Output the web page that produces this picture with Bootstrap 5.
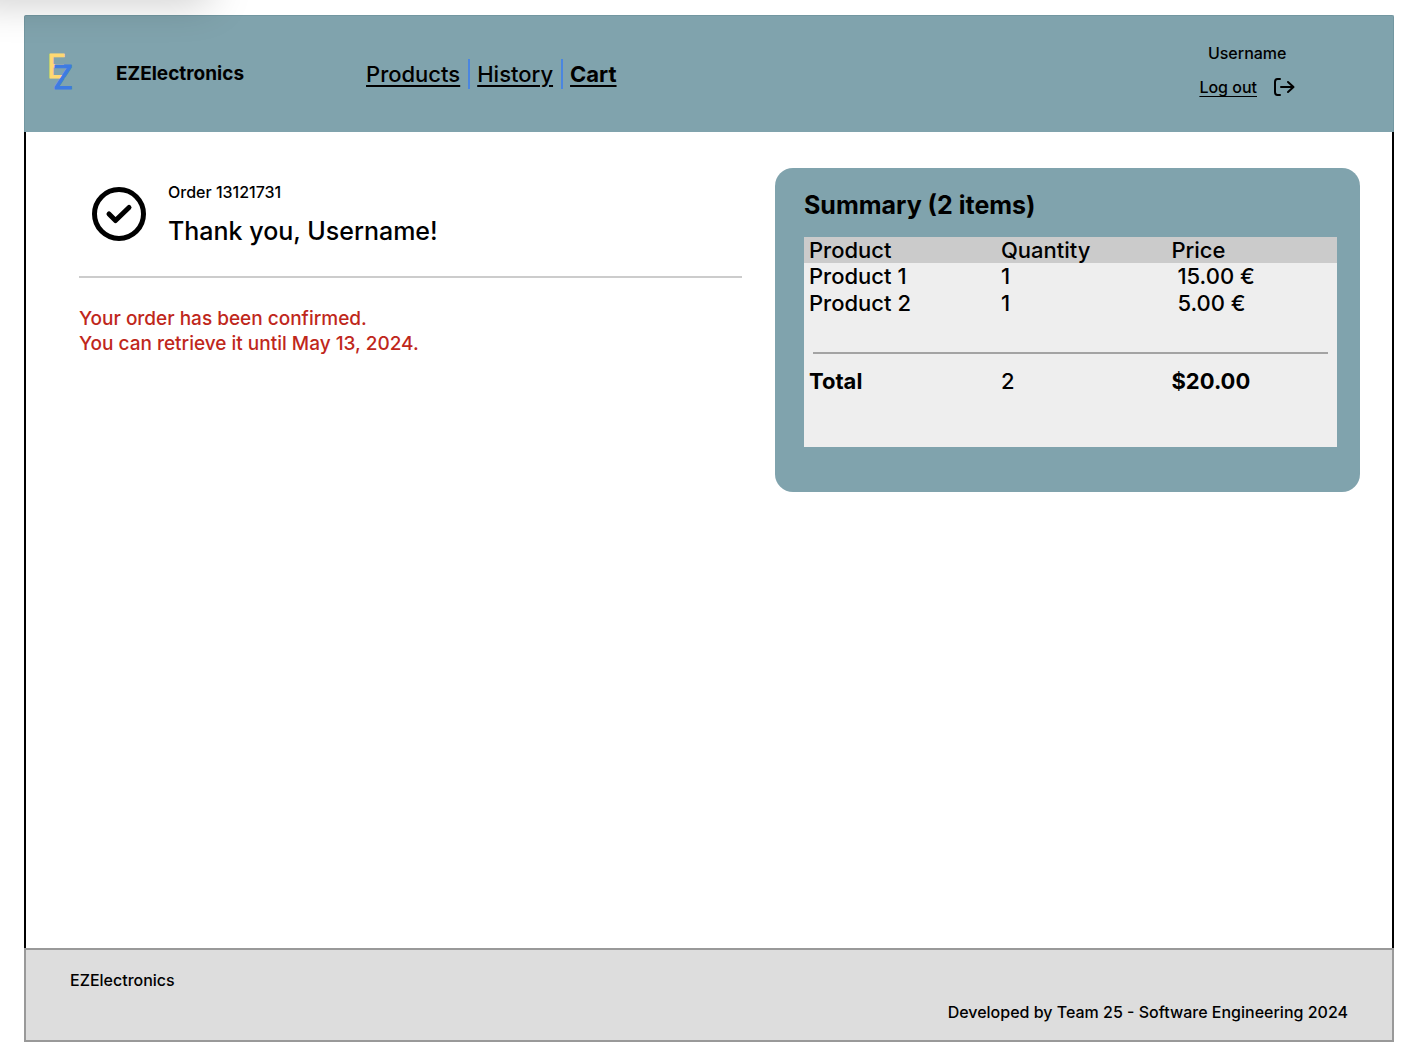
<!DOCTYPE html>
<html lang="en">
<head>
<meta charset="utf-8">
<meta name="viewport" content="width=device-width, initial-scale=1">
<title>EZElectronics - Order confirmed</title>
<link href="https://cdn.jsdelivr.net/npm/bootstrap@5.3.0/dist/css/bootstrap.min.css" rel="stylesheet">
<style>
  body { font-family: Inter, "Liberation Sans", sans-serif; font-size: 16px; font-weight: 500; line-height: 24px; color: #000; background: #fff; padding: 15px 24px 22px; }
  a, a:hover { color: #000; text-underline-offset: 3px; }
  .corner-shade { position: absolute; top: -30px; left: -30px; width: 240px; height: 30px; box-shadow: 0 0 40px rgba(0,0,0,.25); pointer-events: none; }
  .site-header { background: #80a3ad; min-height: 117px; padding: 0 98px 0 24px; border: 1px solid #7397a1; border-width: 1px 1px 0; border-radius: 2px 2px 0 0; }
  .brand-link { gap: 39px; font-size: 19px; text-decoration: none; }
  .brand-logo { overflow: visible; }
  .brand-logo text { font-size: 32px; font-weight: 400; stroke-width: 1; stroke-linejoin: round; }
  .site-nav { margin-left: 122px; font-size: 22px; line-height: 30px; }
  .site-nav li + li { border-left: 2px solid #4a86e0; margin-left: 8px; padding-left: 7px; }
  .user-box { gap: 10px; padding-bottom: 8px; }
  .site-main { display: grid; grid-template-columns: 17fr 15fr; border: solid #000; border-width: 0 2px; padding: 36px 32px 36px 53px; column-gap: 33px; }
  .summary-col { background: #80a3ad; border-radius: 18px; padding: 22px 23px 45px 29px; }
  .order-head { padding: 12px 13px 28px; gap: 22px; }
  .order-title { font-size: 25px; line-height: 34px; margin: 10px 0 0; }
  .soft-rule { border: 0; border-top: 2px solid #ccc; opacity: 1; margin: 0; }
  .order-note { color: #bf271b; font-size: 19px; line-height: 25px; margin: 28px 0 0; }
  .summary-title { font-size: 25px; line-height: 30px; margin: 0 0 17px; }
  .summary-box { background: #eee; padding-bottom: 53px; }
  .summary-table { table-layout: fixed; font-size: 22px; line-height: 26px; }
  .summary-table th, .summary-table td { padding: 0 5px; font-weight: 500; }
  .summary-table thead { background: #cbcbcb; }
  .summary-table tbody td { line-height: 27px; }
  .summary-table .amount { padding-left: 11px; }
  .total-rule { border: 0; border-top: 2px solid #a3a3a3; opacity: 1; margin: 35px 4px 14px; }
  .site-footer { background: #ddd; border: 2px solid #999; padding: 18px 44px 16px; gap: 8px; }
  .text-medium { font-weight: 500; }
</style>
<script src="https://cdn.jsdelivr.net/npm/bootstrap@5.3.0/dist/js/bootstrap.bundle.min.js"></script>
</head>
<body class="min-vh-100 d-flex flex-column position-relative overflow-x-hidden">
<header class="site-header d-flex align-items-center">
  <a class="brand-link d-flex align-items-center fw-bold" href="#">
    <svg class="brand-logo" width="28" height="40" viewBox="0 0 28 40" role="img" aria-label="EZ">
      <text x="-2" y="24" fill="#ffd972" stroke="#ffd972">E</text>
      <text x="4" y="35" fill="#3d7be3" stroke="#3d7be3">Z</text>
    </svg>
    <span>EZElectronics</span>
  </a>
  <nav aria-label="Main">
    <ul class="site-nav list-unstyled d-flex mb-0">
      <li><a href="#">Products</a></li>
      <li><a href="#">History</a></li>
      <li><a class="fw-bold" href="#" aria-current="page">Cart</a></li>
    </ul>
  </nav>
  <div class="user-box d-flex flex-column align-items-center ms-auto">
    <span>Username</span>
    <a class="d-flex align-items-center gap-3" href="#">
      <span>Log out</span>
      <svg width="22" height="18" viewBox="0 0 22 18" fill="none" stroke="#000" stroke-width="2" stroke-linecap="round" stroke-linejoin="round" aria-hidden="true">
        <path d="M7 1H4.500Q2 1 2 4V14Q2 17 4.500 17H7M8 9H20M15 4L20.500 9L15 14"/>
      </svg>
    </a>
  </div>
</header>

<main class="site-main align-items-start flex-grow-1">
  <section>
    <div class="order-head d-flex align-items-center">
      <svg width="54" height="54" viewBox="0 0 54 54" fill="none" stroke="#000" stroke-linecap="round" stroke-linejoin="round" aria-hidden="true">
        <circle cx="27" cy="27" r="24.500" stroke-width="5"/>
        <path d="M17 27L23.500 33.500L37 20.500" stroke-width="5"/>
      </svg>
      <div>
        <div>Order 13121731</div>
        <h1 class="order-title text-medium">Thank you, Username!</h1>
      </div>
    </div>
    <hr class="soft-rule">
    <p class="order-note">Your order has been confirmed.<br>You can retrieve it until May 13, 2024.</p>
  </section>

  <section class="summary-col">
    <h2 class="summary-title fw-bold">Summary (2 items)</h2>
    <div class="summary-box">
      <table class="summary-table w-100">
        <colgroup><col style="width:36%"><col style="width:32%"><col style="width:32%"></colgroup>
        <thead>
          <tr><th scope="col">Product</th><th scope="col">Quantity</th><th scope="col">Price</th></tr>
        </thead>
        <tbody>
          <tr><td>Product 1</td><td>1</td><td class="amount">15.00 €</td></tr>
          <tr><td>Product 2</td><td>1</td><td class="amount">5.00 €</td></tr>
        </tbody>
        <tfoot>
          <tr><td colspan="3"><hr class="total-rule"></td></tr>
          <tr><th class="fw-bold" scope="row">Total</th><td>2</td><td class="fw-bold">$20.00</td></tr>
        </tfoot>
      </table>
    </div>
  </section>
</main>

<footer class="site-footer d-flex flex-column">
  <div>EZElectronics</div>
  <div class="text-end">Developed by Team 25 - Software Engineering 2024</div>
</footer>
<div class="corner-shade" aria-hidden="true"></div>
</body>
</html>
